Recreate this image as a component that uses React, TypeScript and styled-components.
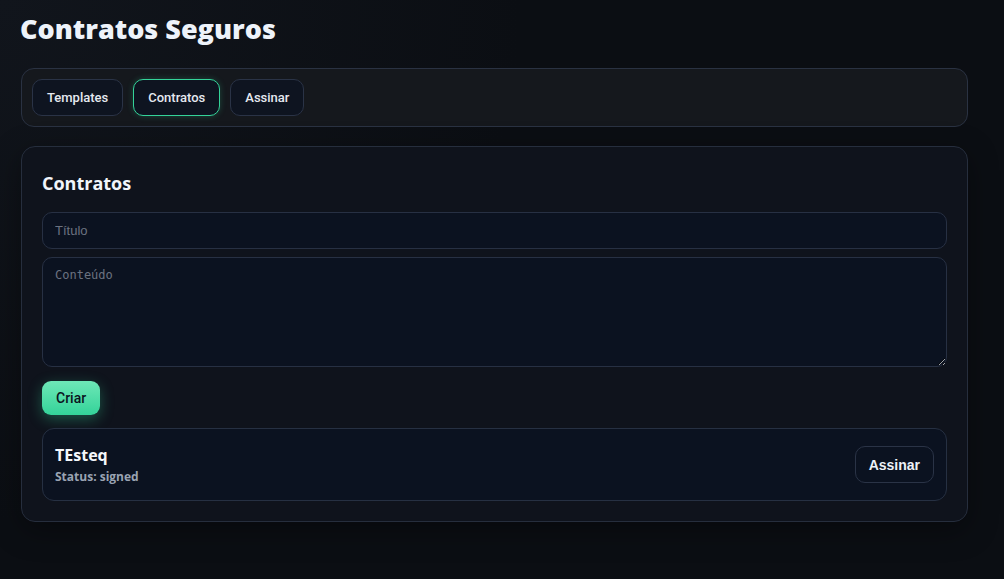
import styled, { createGlobalStyle, css } from "styled-components";

const GlobalStyle = createGlobalStyle`
  html, body {
    margin: 0;
    padding: 0;
    min-height: 100%;
    background: #0b0e13;
  }
  body {
    font-family: "Open Sans", "Liberation Sans", sans-serif;
    color: #e8edf5;
    background: radial-gradient(circle at 0% 0%, #11151c 0%, #0b0e13 45%, #0b0e13 100%);
    min-height: 579px;
  }
  * {
    box-sizing: border-box;
  }
`;

const Page = styled.div`
  padding: 11px 36px 40px 21px;
  display: flex;
  flex-direction: column;
`;

const Title = styled.h1`
  margin: 0 0 22px -1px;
  font-family: "Open Sans", sans-serif;
  font-weight: 800;
  font-size: 27px;
  line-height: 35px;
  color: #eef3fa;
`;

const TabBar = styled.nav`
  display: flex;
  gap: 10px;
  padding: 10px 10px;
  border: 1px solid #2a3242;
  border-radius: 13px;
  background: #15181d;
  margin-bottom: 19px;
`;

const Tab = styled.button<{ $active?: boolean }>`
  height: 37px;
  padding: 0 14px;
  border-radius: 10px;
  border: 1px solid #2a3346;
  background: #0e1420;
  color: #e5e9f0;
  font-family: Roboto, "Liberation Sans", sans-serif;
  font-size: 13px;
  font-weight: 500;
  cursor: pointer;
  ${(p) =>
    p.$active &&
    css`
      border-color: #34d399;
      box-shadow: 0 0 6px rgba(52, 211, 153, 0.25);
    `}
`;

const Card = styled.section`
  border: 1px solid #262e3d;
  border-radius: 14px;
  background: #0f131c;
  padding: 23px 20px 20px 20px;
  display: flex;
  flex-direction: column;
  box-shadow: 0 8px 30px rgba(0, 0, 0, 0.35);
`;

const CardTitle = styled.h2`
  margin: 0 0 16px 0;
  font-family: "Open Sans", sans-serif;
  font-weight: 700;
  font-size: 18px;
  line-height: 26px;
  color: #f1f5fb;
`;

const fieldBase = css`
  width: 100%;
  border: 1px solid #273043;
  border-radius: 10px;
  background: #0b1220;
  color: #e5e9f0;
  outline: none;
  &::placeholder {
    color: #6b7280;
  }
`;

const TextInput = styled.input`
  ${fieldBase}
  height: 37px;
  padding: 0 12px;
  font-family: "Liberation Sans", Arial, sans-serif;
  font-size: 13px;
  margin-bottom: 8px;
`;

const TextArea = styled.textarea`
  ${fieldBase}
  height: 110px;
  padding: 10px 12px;
  font-family: "DejaVu Sans Mono", monospace;
  font-size: 12px;
  resize: vertical;
  margin-bottom: 14px;
  display: block;
`;

const CreateButton = styled.button`
  align-self: flex-start;
  height: 34px;
  padding: 0 14px;
  border: none;
  border-radius: 9px;
  background: linear-gradient(180deg, #6ee7b7 0%, #34d399 100%);
  color: #0b1220;
  font-family: Roboto, "Liberation Sans", sans-serif;
  font-size: 14px;
  font-weight: 500;
  box-shadow: 0 4px 14px rgba(52, 211, 153, 0.35);
  cursor: pointer;
  margin-bottom: 13px;
`;

const Item = styled.div`
  display: flex;
  align-items: center;
  justify-content: space-between;
  height: 73px;
  padding: 0 12px;
  border: 1px solid #263042;
  border-radius: 12px;
  background: #0b1220;
`;

const ItemInfo = styled.div`
  display: flex;
  flex-direction: column;
  gap: 2px;
`;

const ItemName = styled.div`
  font-family: "Open Sans", sans-serif;
  font-weight: 700;
  font-size: 16px;
  line-height: 22px;
  color: #f5f8fc;
`;

const ItemStatus = styled.div`
  font-family: "Open Sans", sans-serif;
  font-weight: 700;
  font-size: 12px;
  line-height: 18px;
  color: #9aa3b2;
`;

const SignButton = styled.button`
  height: 37px;
  padding: 0 13px;
  border-radius: 10px;
  border: 1px solid #2a3346;
  background: #0b1220;
  color: #eef2f8;
  font-family: "Liberation Sans", Arial, sans-serif;
  font-size: 14px;
  font-weight: 700;
  cursor: pointer;
`;

export default function App() {
  return (
    <>
      <GlobalStyle />
      <Page>
        <Title>Contratos Seguros</Title>
        <TabBar>
          <Tab>Templates</Tab>
          <Tab $active>Contratos</Tab>
          <Tab>Assinar</Tab>
        </TabBar>
        <Card>
          <CardTitle>Contratos</CardTitle>
          <TextInput placeholder="Título" />
          <TextArea placeholder="Conteúdo" />
          <CreateButton>Criar</CreateButton>
          <Item>
            <ItemInfo>
              <ItemName>TEsteq</ItemName>
              <ItemStatus>Status: signed</ItemStatus>
            </ItemInfo>
            <SignButton>Assinar</SignButton>
          </Item>
        </Card>
      </Page>
    </>
  );
}
